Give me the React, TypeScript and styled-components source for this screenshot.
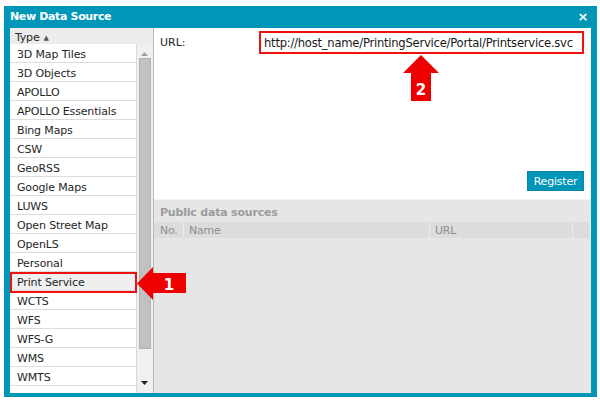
import React from "react";
import styled, { createGlobalStyle } from "styled-components";

const Global = createGlobalStyle`
  html, body { margin: 0; padding: 0; background: #ffffff; }
  body { font-family: "DejaVu Sans", Verdana, sans-serif; font-size: 11px; color: #262626; }
  * { box-sizing: border-box; }
`;

const TEAL = "#0096b8";

const Stage = styled.div`
  position: relative;
  width: 600px;
  height: 403px;
  padding: 6px 0 0 4px;
`;

const Window = styled.div`
  width: 593px;
  height: 391px;
  background: ${TEAL};
  display: flex;
  flex-direction: column;
  padding: 0 6px 4px 6px;
`;

const TitleBar = styled.div`
  height: 22px;
  flex-shrink: 0;
  display: flex;
  align-items: center;
  justify-content: space-between;
  color: #ffffff;
  font-weight: bold;
  font-size: 11px;
  letter-spacing: -0.35px;
  padding: 0 0 1px 0;
`;

const Close = styled.span`
  font-size: 13px;
  font-weight: bold;
  line-height: 1;
  margin-right: 3px;
`;

const Body = styled.div`
  flex: 1;
  display: flex;
  min-height: 0;
`;

const LeftPane = styled.div`
  width: 144px;
  display: flex;
  flex-direction: column;
  background: #f0f0f0;
  border-right: 1px solid #b8b8b8;
`;

const TypeHeader = styled.div`
  height: 16px;
  flex-shrink: 0;
  display: flex;
  align-items: center;
  padding: 2px 0 0 5px;
  background: #ececec;
  font-size: 11px;
  letter-spacing: -0.2px;
  gap: 4px;
`;

const SortArrow = styled.span`
  font-size: 7px;
  color: #555;
  margin-top: 1px;
`;

const ListArea = styled.div`
  flex: 1;
  display: flex;
  min-height: 0;
`;

const List = styled.div`
  width: 127px;
  overflow: hidden;
  border-right: 1px solid #d8d8d8;
  background: #ffffff;
`;

const Row = styled.div<{ $selected?: boolean }>`
  height: 19px;
  flex-shrink: 0;
  display: flex;
  align-items: center;
  padding: 2px 0 0 7px;
  border-bottom: 1px solid #dcdcdc;
  background: ${(p) => (p.$selected ? "#efefef" : "#ffffff")};
  white-space: nowrap;
  letter-spacing: -0.15px;
`;

const ScrollBar = styled.div`
  width: 15px;
  display: flex;
  flex-direction: column;
  align-items: center;
  background: #f0f0f0;
  padding-top: 6px;
`;

const ScrollArrow = styled.div`
  height: 8px;
  flex-shrink: 0;
  display: flex;
  align-items: center;
  justify-content: center;
`;

const Thumb = styled.div`
  width: 12px;
  height: 291px;
  flex-shrink: 0;
  background: #c1c1c1;
  border: 1px solid #b0b0b0;
`;

const Spacer = styled.div`
  flex: 1;
`;

const RightPane = styled.div`
  flex: 1;
  display: flex;
  flex-direction: column;
  min-width: 0;
`;

const FormArea = styled.div`
  height: 172px;
  flex-shrink: 0;
  background: #ffffff;
  display: flex;
  flex-direction: column;
  padding: 3px 7px 8px 6px;
  border-bottom: 1px solid #f2f2f2;
`;

const FieldRow = styled.div`
  display: flex;
  align-items: center;
`;

const Label = styled.div`
  width: 99px;
  font-size: 11px;
`;

const UrlBox = styled.div`
  width: 325px;
  height: 23px;
  border: 2px solid #ee1111;
  display: flex;
  align-items: center;
  padding-left: 3px;
  font-size: 11.6px;
  letter-spacing: -0.25px;
  color: #1a1a1a;
  white-space: nowrap;
`;

const ButtonRow = styled.div`
  margin-top: auto;
  display: flex;
  justify-content: flex-end;
`;

const RegisterButton = styled.button`
  height: 20px;
  width: 57px;
  padding: 0;
  border: 1px solid #0a86a5;
  background: ${TEAL};
  color: #ffffff;
  font-family: "DejaVu Sans", Verdana, sans-serif;
  font-size: 11px;
  letter-spacing: -0.2px;
`;

const PublicArea = styled.div`
  flex: 1;
  background: #e6e6e6;
  display: flex;
  flex-direction: column;
  padding-top: 4px;
`;

const SectionTitle = styled.div`
  height: 17px;
  display: flex;
  align-items: center;
  padding-left: 6px;
  font-weight: bold;
  color: #9b9b9b;
  font-size: 11px;
  letter-spacing: -0.2px;
`;

const TableHead = styled.div`
  height: 16px;
  margin-top: 1px;
  display: flex;
`;

const HeadCell = styled.div<{ $w?: number }>`
  ${(p) => (p.$w ? `width: ${p.$w}px;` : "flex: 1;")}
  background: #dcdcdc;
  border-right: 1px solid #ececec;
  display: flex;
  align-items: center;
  padding-left: 5px;
  color: #8e8e8e;
  font-size: 11px;
  letter-spacing: -0.2px;
  &:first-child { padding-left: 6px; }
`;

const Overlay = styled.svg`
  position: absolute;
  overflow: visible;
`;

const HighlightBox = styled.div`
  position: absolute;
  left: 10px;
  top: 272px;
  width: 127px;
  height: 21px;
  border: 2px solid #ee1111;
`;

const types = [
  "3D Map Tiles",
  "3D Objects",
  "APOLLO",
  "APOLLO Essentials",
  "Bing Maps",
  "CSW",
  "GeoRSS",
  "Google Maps",
  "LUWS",
  "Open Street Map",
  "OpenLS",
  "Personal",
  "Print Service",
  "WCTS",
  "WFS",
  "WFS-G",
  "WMS",
  "WMTS",
  "",
];

export default function App() {
  return (
    <>
      <Global />
      <Stage>
        <Window>
          <TitleBar>
            <span>New Data Source</span>
            <Close>×</Close>
          </TitleBar>
          <Body>
            <LeftPane>
              <TypeHeader>
                Type <SortArrow>▲</SortArrow>
              </TypeHeader>
              <ListArea>
                <List>
                  {types.map((t, i) => (
                    <Row key={i} $selected={t === "Print Service"}>
                      {t}
                    </Row>
                  ))}
                </List>
                <ScrollBar>
                  <ScrollArrow>
                    <svg width="7" height="4" viewBox="0 0 7 4">
                      <path d="M0 4 L3.5 0 L7 4 Z" fill="#a0a0a0" />
                    </svg>
                  </ScrollArrow>
                  <Thumb />
                  <Spacer />
                  <ScrollArrow style={{ marginBottom: 6 }}>
                    <svg width="7" height="4" viewBox="0 0 7 4">
                      <path d="M0 0 L7 0 L3.5 4 Z" fill="#222" />
                    </svg>
                  </ScrollArrow>
                </ScrollBar>
              </ListArea>
            </LeftPane>
            <RightPane>
              <FormArea>
                <FieldRow>
                  <Label>URL:</Label>
                  <UrlBox>http://host_name/PrintingService/Portal/Printservice.svc</UrlBox>
                </FieldRow>
                <ButtonRow>
                  <RegisterButton>Register</RegisterButton>
                </ButtonRow>
              </FormArea>
              <PublicArea>
                <SectionTitle>Public data sources</SectionTitle>
                <TableHead>
                  <HeadCell $w={30}>No.</HeadCell>
                  <HeadCell $w={246}>Name</HeadCell>
                  <HeadCell $w={143}>URL</HeadCell>
                  <HeadCell />
                </TableHead>
              </PublicArea>
            </RightPane>
          </Body>
        </Window>
        <HighlightBox />
        <Overlay style={{ left: 137, top: 267 }} width="50" height="33" viewBox="0 0 50 33">
          <path d="M0 16.5 L16 0 L16 6 L49 6 L49 26 L16 26 L16 33 Z" fill="#ee0000" />
          <text x="32" y="23" textAnchor="middle" fill="#ffffff" fontFamily="DejaVu Sans, sans-serif" fontWeight="bold" fontSize="15">1</text>
        </Overlay>
        <Overlay style={{ left: 402, top: 55 }} width="38" height="46" viewBox="0 0 38 46">
          <path d="M19 0 L37 18 L29 18 L29 46 L9 46 L9 18 L1 18 Z" fill="#ee0000" />
          <text x="19" y="40" textAnchor="middle" fill="#ffffff" fontFamily="DejaVu Sans, sans-serif" fontWeight="bold" fontSize="15">2</text>
        </Overlay>
      </Stage>
    </>
  );
}
